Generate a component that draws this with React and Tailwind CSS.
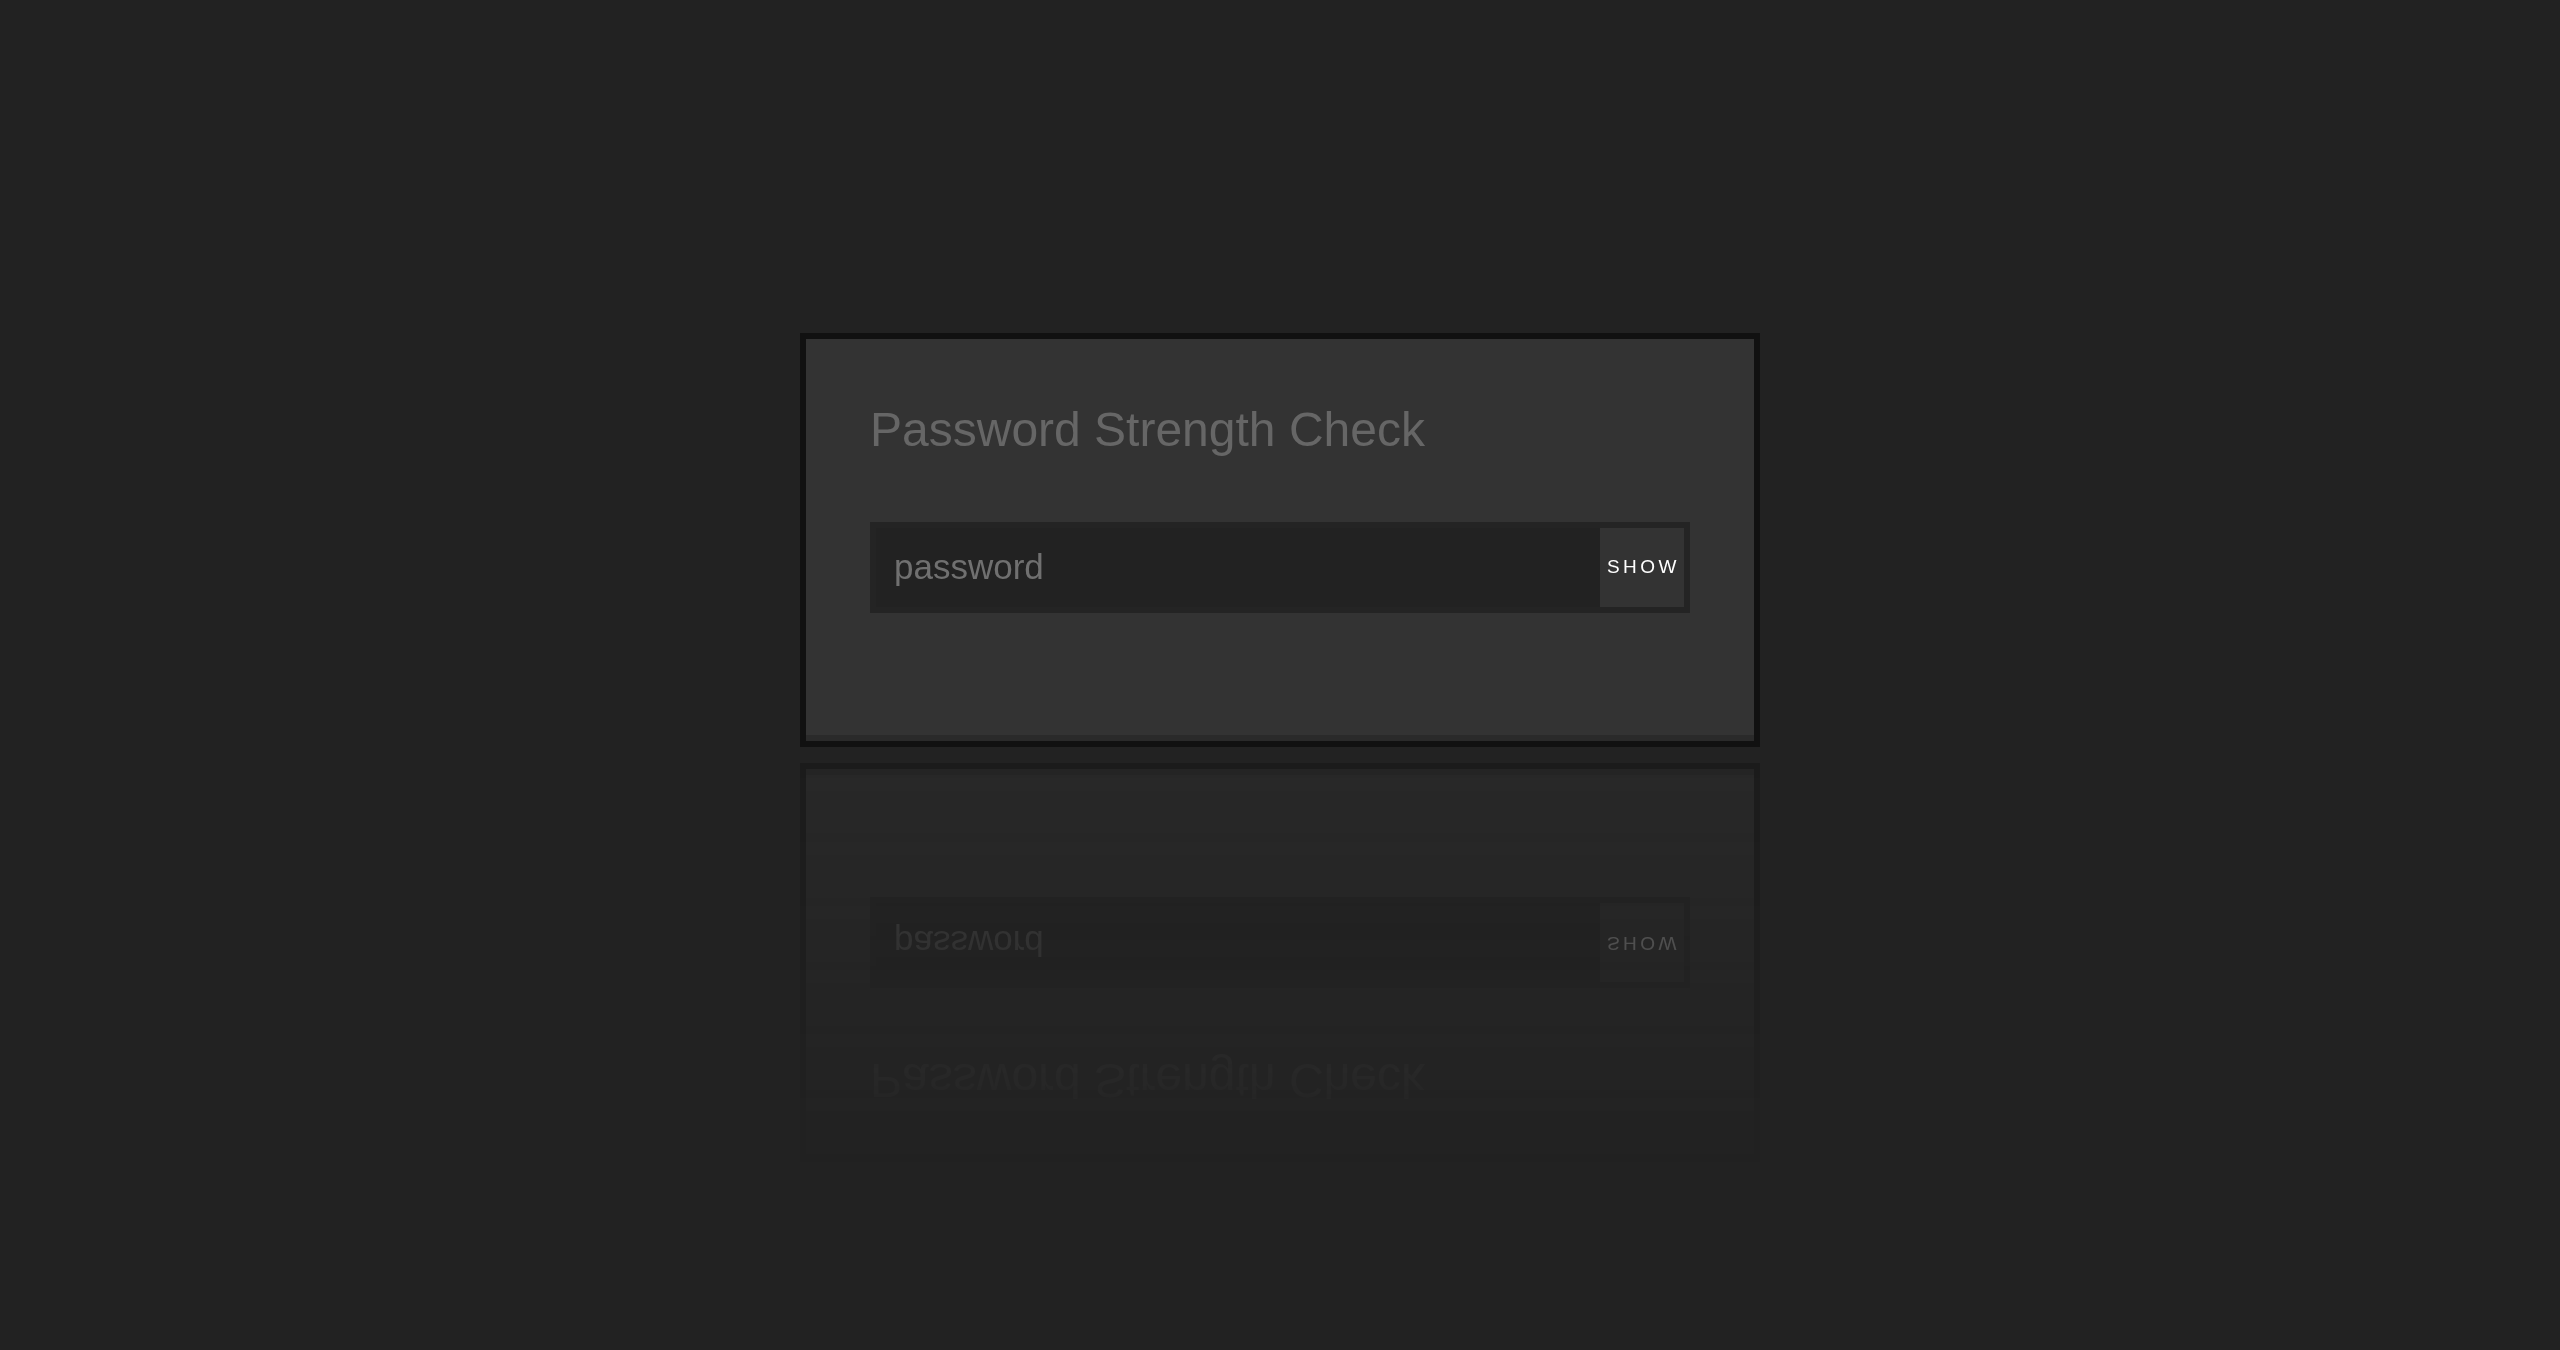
import React, { useState } from 'react'

const App = () => {
  const [value, setValue] = useState('')
  const [shown, setShown] = useState(false)

  return (
    <div className="min-h-screen w-full bg-[#222222] pt-[333px] font-['Liberation_Sans',Arial,sans-serif]">
      <div className="mx-auto w-[960px] border-[6px] border-[#111111] bg-[#333333] [-webkit-box-reflect:below_16px_linear-gradient(transparent_3%,rgba(0,0,0,0.37))]">
        <div className="px-[64px] pt-[64px] pb-[122px]">
          <h1 className="text-[48px] leading-[54px] font-normal text-[#666666] mb-[65px]">Password Strength Check</h1>
          <div className="flex h-[91px] border-[6px] border-[#242424] bg-[#222222]">
            <input
              type={shown ? 'text' : 'password'}
              value={value}
              onChange={e => setValue(e.target.value)}
              placeholder="password"
              className="flex-1 min-w-0 bg-[#222222] pl-[18px] text-[35px] text-[#888888] outline-none placeholder:text-[#707070] font-['Liberation_Sans',Arial,sans-serif]"
            />
            <button
              onClick={() => setShown(s => !s)}
              className="w-[84px] h-full bg-[#333333] text-[19px] tracking-[3.5px] pl-[3px] text-white font-['Liberation_Sans',Arial,sans-serif]"
            >
              SHOW
            </button>
          </div>
        </div>
        <div className="h-[6px] bg-[#2a2a2a]" />
      </div>
    </div>
  )
}

export default App
